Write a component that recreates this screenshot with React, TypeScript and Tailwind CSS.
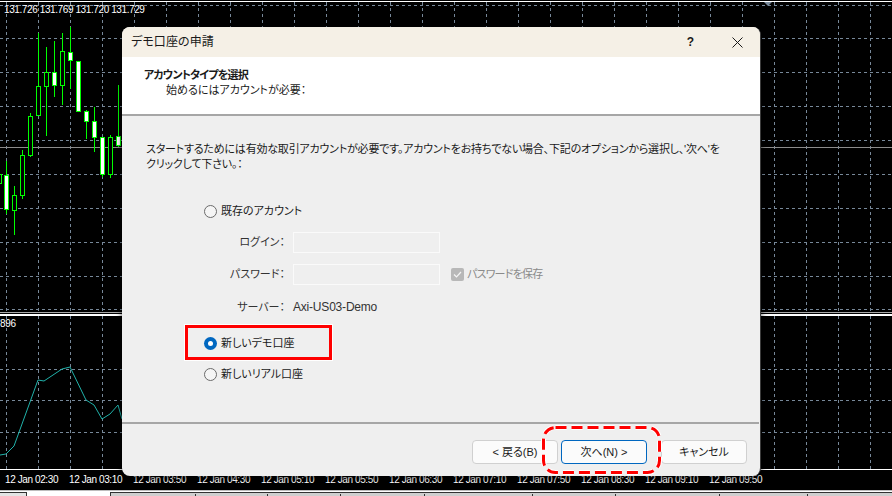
import React from "react";

const jp = "font-['Liberation_Sans','Noto_Sans_CJK_JP',sans-serif] [font-feature-settings:'palt']";

// x, wick top, wick bottom, body top, body bottom, white body
const candles: [number, number, number, number, number, boolean][] = [
  [-1, 174, 183, 174, 183, false],
  [6, 161, 214, 175, 209, true],
  [14, 186, 235, 195, 210, false],
  [22, 150, 199, 155, 195, false],
  [30, 113, 157, 116, 155, false],
  [38, 33, 115, 86, 115, false],
  [46, 47, 136, 72, 86, false],
  [54, 41, 97, 72, 85, true],
  [62, 33, 105, 51, 85, false],
  [70, 27, 89, 52, 60, true],
  [78, 61, 111, 61, 111, true],
  [86, 110, 139, 111, 121, true],
  [94, 107, 152, 121, 137, true],
  [102, 137, 177, 137, 174, true],
  [110, 135, 178, 137, 174, false],
  [118, 85, 147, 136, 145, true],
];

const times = ["02:30", "03:10", "03:50", "04:30", "05:10", "05:50", "06:30", "07:10", "07:50", "08:30", "09:10", "09:50"];
const gridX = Array.from({ length: 28 }, (_, i) => 6.5 + i * 32);
const gridTop = [5.5, 38.5, 72.5, 106.5, 140.5, 174.5, 208.5, 242.5, 276.5, 309.5];
const gridBottom = [369.5, 400.5, 432.5];
const tabTicks = [195, 267, 340, 424, 532, 615, 719, 807];

const Chart = () => (
  <svg width="892" height="470" className="block shrink-0">
    <rect x="0" y="1" width="892" height="1" fill="#ffffff" />
    {gridX.map((x) => (
      <g key={x}>
        <line x1={x} x2={x} y1="2" y2="312" stroke="#778899" strokeDasharray="3 3" />
        <line x1={x} x2={x} y1="316" y2="469" stroke="#778899" strokeDasharray="3 3" />
      </g>
    ))}
    {[...gridTop, ...gridBottom].map((y) => (
      <line key={y} x1="0" x2="892" y1={y} y2={y} stroke="#778899" strokeDasharray="3 3" />
    ))}
    <line x1="0" x2="892" y1="147.5" y2="147.5" stroke="#8c8c8c" />
    <rect x="0" y="312" width="892" height="1" fill="#a8a8a8" />
    <rect x="0" y="314" width="892" height="2" fill="#ffffff" />
    <rect x="0" y="469" width="892" height="1" fill="#ffffff" />
    <polygon points="764,2 772,2 768,6" fill="#778899" />
    {candles.map(([x, wt, wb, bt, bb, white]) => (
      <g key={x}>
        <line x1={x + 0.5} x2={x + 0.5} y1={wt} y2={wb} stroke="#00ff00" />
        <rect
          x={x - 1.5}
          y={bt + 0.5}
          width="4"
          height={bb - bt}
          fill={white ? "#ffffff" : "#000000"}
          stroke="#00ff00"
        />
      </g>
    ))}
    <polyline
      points="0,455 6,454 14,446 38,380 44,381 62,369 70,367 86,400 94,405 102,419 110,414 118,405 122,419"
      fill="none"
      stroke="#20b2aa"
    />
    <line x1="6.5" x2="6.5" y1="469" y2="470" stroke="#ffffff" />
    <line x1="70.5" x2="70.5" y1="469" y2="470" stroke="#ffffff" />
  </svg>
);

const Radio = ({ label, checked = false }: { label: string; checked?: boolean }) => (
  <div className="flex items-center h-[15px]">
    {checked ? (
      <span className="w-[13px] h-[13px] rounded-full bg-[#0067c0] flex items-center justify-center shrink-0">
        <span className="w-[5px] h-[5px] rounded-full bg-white" />
      </span>
    ) : (
      <span className="w-[13px] h-[13px] rounded-full border border-[#6b6b6b] bg-[#f5f5f5] shrink-0" />
    )}
    <span className="ml-[4px] text-[11px] leading-[15px] text-[#1a1a1a]">{label}</span>
  </div>
);

const Button = ({ label, primary = false }: { label: string; primary?: boolean }) => (
  <button
    className={
      primary
        ? "w-[86px] h-[24px] rounded-[4px] border border-[#0067c0] bg-[#fbfbfb] text-[11px] text-[#1a1a1a] flex items-center justify-center"
        : "w-[86px] h-[24px] rounded-[4px] border border-[#d0d0d0] bg-[#fbfbfb] text-[11px] text-[#1a1a1a] flex items-center justify-center"
    }
  >
    {label}
  </button>
);

const Dialog = () => (
  <div className="absolute left-[122px] top-[27px] w-[639px] h-[449px] rounded-[8px] overflow-hidden bg-[#efefef] border-r border-[#3c3c3c] flex flex-col shadow-[0_1px_6px_rgba(0,0,0,0.7)]">
    <div className="h-[30px] shrink-0 bg-[#f5f0e6] flex items-center pl-[9px] pr-[17px]">
      <span className="text-[12px] tracking-[0.1px] text-[#1a1a1a]">デモ口座の申請</span>
      <span className="ml-auto text-[12px] font-bold text-[#1a1a1a] font-['Liberation_Sans',sans-serif]">?</span>
      <svg width="11" height="11" viewBox="0 0 11 11" className="ml-[38px]">
        <path d="M0.5 0.5 L10.5 10.5 M10.5 0.5 L0.5 10.5" stroke="#1a1a1a" strokeWidth="1" fill="none" />
      </svg>
    </div>

    <div className="h-[59px] shrink-0 bg-white pt-[11px] pl-[22px] border-b-2 border-[#a6a6a6] leading-[15px] text-[11px] text-[#1a1a1a]">
      <div className="font-bold tracking-[-0.8px]">アカウントタイプを選択</div>
      <div className="pl-[22px]">始めるにはアカウントが必要：</div>
    </div>

    <div className="flex-1 flex flex-col pl-[24px] pt-[26px]">
      <p className="whitespace-nowrap text-[11px] leading-[15px] tracking-[-0.2px] text-[#1a1a1a]">
        スタートするためには有効な取引アカウントが必要です。アカウントをお持ちでない場合、下記のオプションから選択し、'次へ'を
        <br />
        クリックして下さい。：
      </p>

      <div className="mt-[32px] ml-[58px] flex flex-col">
        <Radio label="既存のアカウント" />
        <div className="flex items-center mt-[13px] h-[21px]">
          <span className="w-[89px] pr-[8px] text-right text-[11px] text-[#333333]">ログイン：</span>
          <span className="w-[147px] h-[21px] border border-[#fafafa] bg-[#efefef]" />
        </div>
        <div className="flex items-center mt-[11px] h-[21px]">
          <span className="w-[89px] pr-[8px] text-right text-[11px] text-[#333333]">パスワード：</span>
          <span className="w-[147px] h-[21px] border border-[#fafafa] bg-[#efefef]" />
          <span className="ml-[11px] w-[13px] h-[13px] rounded-[2px] bg-[#b8b8b8] flex items-center justify-center">
            <svg width="9" height="9" viewBox="0 0 9 9">
              <path d="M1 4.5 L3.5 7 L8 2" stroke="#f5f5f5" strokeWidth="1.2" fill="none" />
            </svg>
          </span>
          <span className="ml-[3px] text-[11px] tracking-[-0.8px] text-[#8a8a8a]">パスワードを保存</span>
        </div>
        <div className="flex items-center mt-[13px] h-[18px]">
          <span className="w-[89px] pr-[8px] text-right text-[11px] text-[#333333]">サーバー：</span>
          <span className="text-[12px] tracking-[-0.2px] text-[#333333] font-['Liberation_Sans',sans-serif]">Axi-US03-Demo</span>
        </div>
        <div className="mt-[20px]">
          <Radio label="新しいデモ口座" checked />
        </div>
        <div className="mt-[16px]">
          <Radio label="新しいリアル口座" />
        </div>
      </div>
    </div>

    <div className="h-[54px] shrink-0 border-t-2 border-[#a6a6a6] flex items-start justify-end gap-[3px] pt-[16px] pr-[12px] mr-[1px]">
      <Button label="< 戻る(B)" />
      <Button label="次へ(N) >" primary />
      <span className="w-[8px]" />
      <Button label="キャンセル" />
    </div>
  </div>
);

export default function App() {
  return (
    <div className={`relative w-[892px] h-[496px] overflow-hidden bg-black flex flex-col ${jp}`}>
      <Chart />
      <div className="h-[20px] shrink-0 flex pl-[5px] pt-[3px]">
        {times.map((t) => (
          <span key={t} className="w-[64px] shrink-0 text-[10px] leading-[14px] text-white whitespace-nowrap tracking-[-0.4px]">
            12 Jan {t}
          </span>
        ))}
      </div>
      <div className="flex-1 flex flex-col">
        <div className="h-px bg-[#bdbdbd]" />
        <div className="h-px bg-white" />
        <div className="flex-1 flex">
          <span className="w-[27px] border-t border-r border-[#333333] bg-[#e4e4e4]" />
          <span className="w-[83px] bg-white" />
          <div className="relative flex-1 border-l border-t border-[#333333] bg-[#cfcfcf]">
            {tabTicks.map((x) => (
              <span key={x} className="absolute top-px h-[3px] w-px bg-[#333333]" style={{ left: x - 111 }} />
            ))}
          </div>
        </div>
      </div>

      <div className="absolute left-[4px] top-[3px] text-[10px] leading-[13px] text-white whitespace-nowrap tracking-[-0.4px]">
        131.726 131.769 131.720 131.729
      </div>
      <div className="absolute left-0 top-[317px] text-[10px] leading-[13px] text-white tracking-[-0.35px]">
        896
      </div>

      <Dialog />

      {/* red markers from the tutorial screenshot */}
      <div className="absolute left-[185px] top-[325px] w-[147px] h-[35px] border-[3px] border-[#ff0000] outline outline-1 outline-white" />
      <svg width="122" height="50" className="absolute left-[541px] top-[425px]">
        <rect x="2.5" y="2.5" width="116" height="45" rx="12" fill="none" stroke="#ffffff" strokeWidth="5" strokeDasharray="11 5" />
        <rect x="2.5" y="2.5" width="116" height="45" rx="12" fill="none" stroke="#ff0000" strokeWidth="3" strokeDasharray="11 5" />
      </svg>
    </div>
  );
}
